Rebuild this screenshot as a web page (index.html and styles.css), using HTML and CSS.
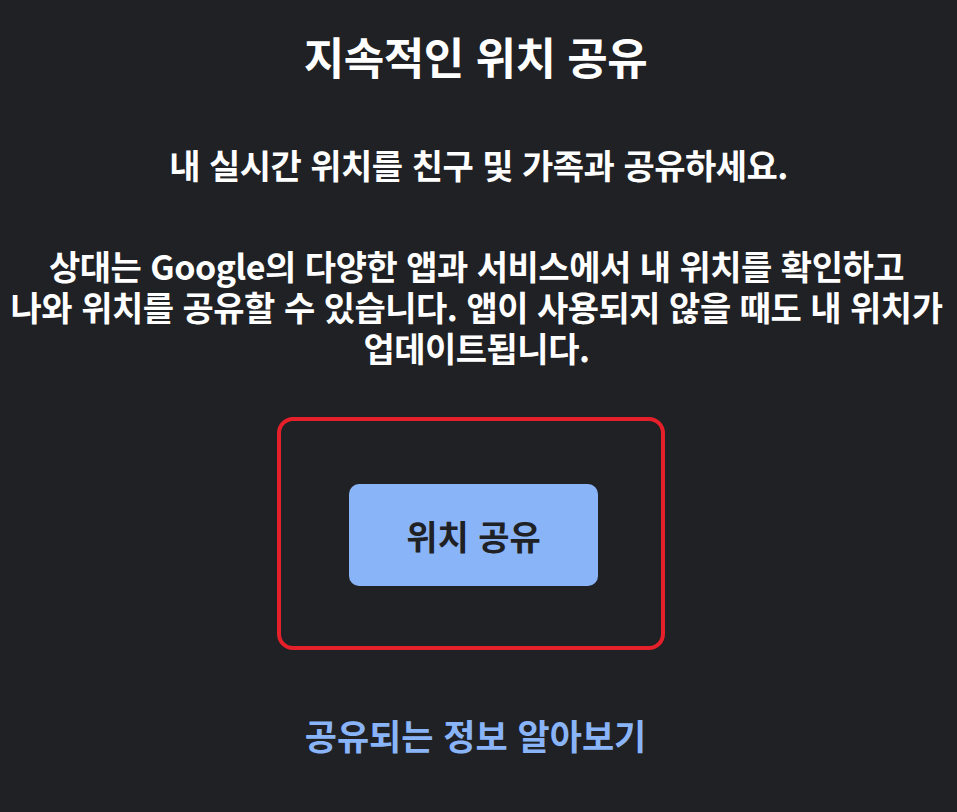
FILE: index.html
```html
<!DOCTYPE html>
<html lang="ko">
<head>
    <meta charset="UTF-8">
    <meta name="viewport" content="width=device-width, initial-scale=1.0">
    <title>지속적인 위치 공유</title>
    <link rel="stylesheet" href="styles.css">
</head>
<body>

    <div class="page">
        <h1 class="title">지속적인 위치 공유</h1>
        <p class="lead">내 실시간 위치를 친구 및 가족과 공유하세요.</p>
        <p class="desc">상대는 Google의 다양한 앱과 서비스에서 내 위치를 확인하고<br>나와 위치를 공유할 수 있습니다. 앱이 사용되지 않을 때도 내 위치가<br>업데이트됩니다.</p>

        <div class="highlight">
            <button class="share-btn" type="button">위치 공유</button>
        </div>

        <a class="learn-more" href="#">공유되는 정보 알아보기</a>
    </div>

</body>
</html>
```

FILE: styles.css
```css
html, body {
    margin: 0;
    padding: 0;
}
body {
    background-color: #202124;
    color: #ffffff;
    font-family: "Noto Sans CJK KR", "Noto Sans", sans-serif;
    width: 957px;
    height: 812px;
    overflow: hidden;
}
.page {
    display: flex;
    flex-direction: column;
    align-items: center;
    text-align: center;
}
.title {
    margin: 30px 6px 0 0;
    font-size: 44px;
    line-height: 52px;
    font-weight: 700;
    letter-spacing: -0.5px;
}
.lead {
    margin: 62px 0 0;
    font-size: 34px;
    line-height: 42px;
    font-weight: 700;
    letter-spacing: -0.5px;
}
.desc {
    margin: 59px 4px 0 0;
    font-size: 34px;
    line-height: 41px;
    font-weight: 700;
    letter-spacing: -0.5px;
}
.highlight {
    margin: 49px 15px 0 0;
    width: 380px;
    height: 225px;
    border: 4px solid #e5202a;
    border-radius: 16px;
    display: flex;
    align-items: center;
    justify-content: center;
}
.share-btn {
    margin: 3px 0 0 5px;
    width: 249px;
    height: 102px;
    border: none;
    border-radius: 10px;
    background: #8ab4f8;
    color: #202124;
    font-family: inherit;
    font-size: 34px;
    font-weight: 700;
    cursor: pointer;
}
.learn-more {
    margin: 63px 6px 0 0;
    color: #8ab4f8;
    font-size: 35px;
    line-height: 44px;
    font-weight: 700;
    text-decoration: none;
}
```
